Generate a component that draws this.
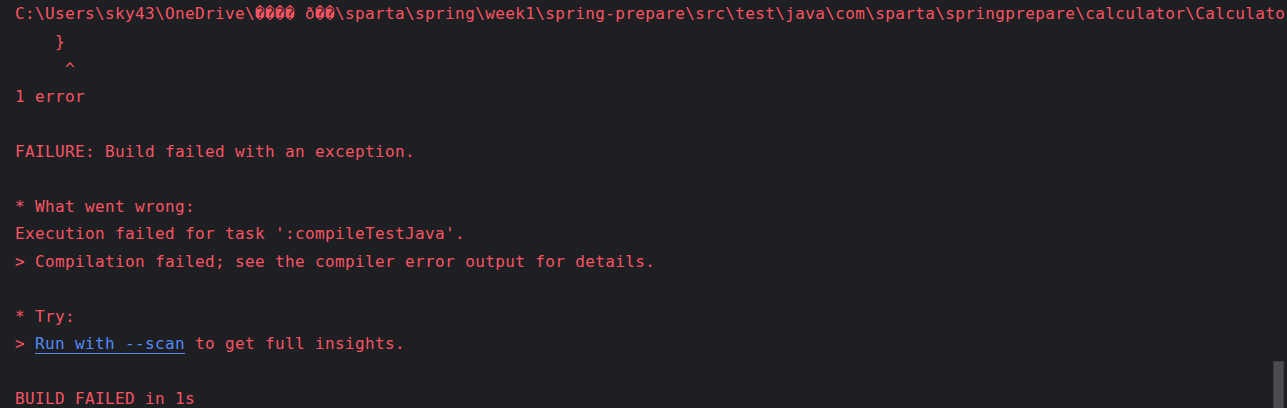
const lines = [
  "C:\\Users\\sky43\\OneDrive\\\uFFFD\uFFFD\uFFFD\uFFFD \u00F0\uFFFD\uFFFD\\sparta\\spring\\week1\\spring-prepare\\src\\test\\java\\com\\sparta\\springprepare\\calculator\\Calculato",
  "    }",
  "     ^",
  "1 error",
  "",
  "FAILURE: Build failed with an exception.",
  "",
  "* What went wrong:",
  "Execution failed for task ':compileTestJava'.",
  "> Compilation failed; see the compiler error output for details.",
  "",
  "* Try:",
  null,
  "",
  "BUILD FAILED in 1s",
];

export default function App() {
  return (
    <div className="relative h-[408px] w-full overflow-hidden bg-[#1e1f22]">
      <div
        className="pl-[15px] text-[16px] leading-[27.5px] tracking-[0.37px] text-[#f75464] whitespace-pre"
        style={{ fontFamily: '"DejaVu Sans Mono", monospace' }}
      >
        {lines.map((line, i) =>
          line === null ? (
            <div key={i} className="h-[27.5px]">
              {"> "}
              <span className="text-[#548af7] underline decoration-1 underline-offset-[4px]">
                Run with --scan
              </span>
              {" to get full insights."}
            </div>
          ) : (
            <div key={i} className="h-[27.5px]">
              {line}
            </div>
          )
        )}
      </div>
      <div className="absolute right-[3px] top-[361px] h-[60px] w-[11px] bg-[#4b4c4f] border border-[#3c3d40]" />
    </div>
  );
}
